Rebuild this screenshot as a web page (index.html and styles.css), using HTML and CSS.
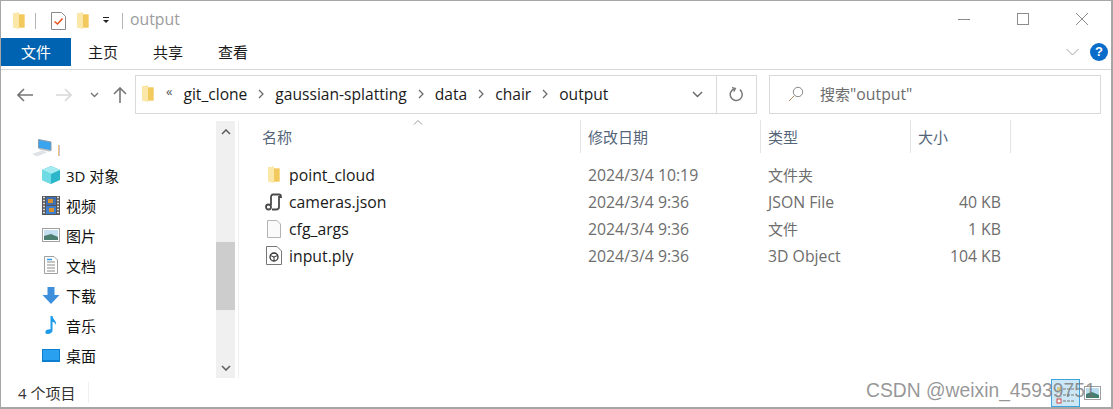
FILE: index.html
```html
<!DOCTYPE html>
<html lang="zh">
<head>
<meta charset="utf-8">
<title>output</title>
<link rel="stylesheet" href="styles.css">
</head>
<body>
<svg class="defs" width="0" height="0">
  <defs>
    <symbol id="folder" viewBox="0 0 14 18">
      <path d="M1 1.5 L7 .5 V2.5 H12.5 V15.5 H1.5 Z" fill="#f5d67b"/>
      <path d="M1 1.5 L7 .5 V17 L1.5 15.8 Z" fill="#fbe8a8"/>
      <path d="M7 2.5 H12.5 V15.5 H7 Z" fill="#f2c95c"/>
    </symbol>
  </defs>
</svg>
<div class="window">
  <header class="titlebar">
    <div class="quick">
      <svg class="qa-folder" width="14" height="18"><use href="#folder"/></svg>
      <span class="vbar first"></span>
      <svg class="qa-check" width="15" height="18" viewBox="0 0 15 18"><path d="M.5 .5H10.500L14.500 4.500V17.500H.5Z" fill="#fff" stroke="#8a8a8a"/><path d="M3.500 9.500L6.500 12L11.500 6.500" fill="none" stroke="#e8541c" stroke-width="1.6"/></svg>
      <svg class="qa-folder2" width="14" height="18"><use href="#folder"/></svg>
      <svg class="qa-drop" width="8" height="7" viewBox="0 0 8 7"><path d="M1 0.5H7" stroke="#222"/><path d="M1 3H7L4 6Z" fill="#222"/></svg>
      <span class="vbar second"></span>
      <span class="title-text">output</span>
    </div>
    <div class="winctl">
      <svg width="14" height="14" viewBox="0 0 14 14"><path d="M1 7.5H13" stroke="#8c8c8c"/></svg>
      <svg width="14" height="14" viewBox="0 0 14 14"><rect x="1.5" y="1.5" width="11" height="11" fill="none" stroke="#8c8c8c"/></svg>
      <svg width="14" height="14" viewBox="0 0 14 14"><path d="M1 1L13 13M13 1L1 13" stroke="#8c8c8c"/></svg>
    </div>
  </header>
  <nav class="ribbon">
    <span class="tab active">文件</span>
    <span class="tab t1">主页</span>
    <span class="tab t2">共享</span>
    <span class="tab t3">查看</span>
    <span class="spacer"></span>
    <svg class="collapse" width="13" height="8" viewBox="0 0 13 8"><path d="M.5 1L6.500 7L12.500 1" fill="none" stroke="#a0a0a0"/></svg>
    <span class="help">?</span>
  </nav>
  <div class="addressrow">
    <div class="navbtns">
      <svg width="16" height="14" viewBox="0 0 16 14"><path d="M1 7H16M7 1L1 7L7 13" fill="none" stroke="#777" stroke-width="1.6"/></svg>
      <svg class="fwd" width="16" height="14" viewBox="0 0 16 14"><path d="M0 7H15M9 1L15 7L9 13" fill="none" stroke="#d8d8d8" stroke-width="1.6"/></svg>
      <svg class="recent" width="9" height="6" viewBox="0 0 9 6"><path d="M1 1L4.5 4.5L8 1" fill="none" stroke="#777" stroke-width="1.4"/></svg>
      <svg class="up" width="14" height="16" viewBox="0 0 14 16"><path d="M7 16V1M1 7L7 1L13 7" fill="none" stroke="#777" stroke-width="1.6"/></svg>
    </div>
    <div class="addressbox">
      <div class="crumbs">
        <svg class="crumb-folder" width="14" height="18"><use href="#folder"/></svg>
        <span class="chev-dbl">«</span>
        <span>git_clone</span>
        <svg class="sep" width="6" height="10" viewBox="0 0 6 10"><path d="M1 1L5 5L1 9" fill="none" stroke="#666" stroke-width="1.2"/></svg>
        <span>gaussian-splatting</span>
        <svg class="sep" width="6" height="10" viewBox="0 0 6 10"><path d="M1 1L5 5L1 9" fill="none" stroke="#666" stroke-width="1.2"/></svg>
        <span>data</span>
        <svg class="sep" width="6" height="10" viewBox="0 0 6 10"><path d="M1 1L5 5L1 9" fill="none" stroke="#666" stroke-width="1.2"/></svg>
        <span>chair</span>
        <svg class="sep" width="6" height="10" viewBox="0 0 6 10"><path d="M1 1L5 5L1 9" fill="none" stroke="#666" stroke-width="1.2"/></svg>
        <span>output</span>
      </div>
      <div class="addr-drop"><svg width="11" height="7" viewBox="0 0 11 7"><path d="M1 1L5.5 5.5L10 1" fill="none" stroke="#666" stroke-width="1.4"/></svg></div>
      <div class="refresh"><svg width="15" height="15" viewBox="0 0 15 15"><path d="M4.5 2.2A6 6 0 1 0 10 2.2" transform="rotate(10 7.5 7.5)" fill="none" stroke="#777" stroke-width="1.5"/><path d="M3 .6L6.4 1.4L4.8 4.6" fill="none" stroke="#777" stroke-width="1.3"/></svg></div>
    </div>
    <div class="searchbox">
      <svg width="16" height="16" viewBox="0 0 16 16"><circle cx="10" cy="6" r="4.7" fill="none" stroke="#888"/><path d="M6.5 9.5L1 15" stroke="#b98a60"/></svg>
      <span class="search-text"><span class="cjk">搜索</span>"output"</span>
    </div>
  </div>
  <main class="main">
    <aside class="sidebar">
      <ul class="tree">
        <li class="pc">
          <svg width="21" height="18" viewBox="0 0 21 18"><path d="M6.500 .5L19 3V11.500L6.500 9Z" fill="#3aa5ee" stroke="#8a98a8"/><path d="M7.500 10L18 12" stroke="#c4c9cf" stroke-width="1.500"/><path d="M0 15L10 11.500L15 13.500L5 17.500Z" fill="#dfe3e8"/></svg>
          <span class="pc-mark">|</span>
        </li>
        <li><svg width="18" height="18" viewBox="0 0 18 18"><path d="M9 0L18 4V14L9 18L0 14V4Z" fill="#2bb6c9"/><path d="M9 0L18 4L9 8L0 4Z" fill="#a5ecf2"/><path d="M0 4L9 8V18L0 14Z" fill="#6fdbe4"/></svg><span>3D 对象</span></li>
        <li><svg width="18" height="19" viewBox="0 0 18 19"><rect width="18" height="19" fill="#555"/><path d="M1 1.500H3M1 4.500H3M1 7.500H3M1 10.500H3M1 13.500H3M1 16.500H3M15 1.500H17M15 4.500H17M15 7.500H17M15 10.500H17M15 13.500H17M15 16.500H17" stroke="#ddd" stroke-width="1.400"/><rect x="4" y="1" width="10" height="8" fill="#3f6fb0"/><rect x="4" y="10" width="10" height="8" fill="#3f7fd0"/><rect x="6" y="3" width="5" height="4" fill="#d8902c"/><rect x="7" y="12" width="5" height="4" fill="#d8902c"/></svg><span>视频</span></li>
        <li><svg width="18" height="14" viewBox="0 0 18 14"><rect x=".5" y=".5" width="17" height="13" fill="#fff" stroke="#a0a0a0"/><rect x="2" y="2" width="14" height="10" fill="#c3dff0"/><path d="M2 8L9 6L16 9V12H2Z" fill="#4d7f70"/></svg><span>图片</span></li>
        <li><svg width="14" height="18" viewBox="0 0 14 18"><path d="M.5 .5H10L13.5 4V17.5H.5Z" fill="#fff" stroke="#a0a0a0"/><path d="M3 6H11M3 9H11M3 12H11M3 15H11" stroke="#8a8a8a"/><path d="M3 3.5H8" stroke="#2e9be8" stroke-width="1.5"/></svg><span>文档</span></li>
        <li><svg width="17" height="17" viewBox="0 0 17 17"><path d="M5 0H12V8H17L8.500 17L0 8H5Z" fill="#3d8fdc"/></svg><span>下载</span></li>
        <li><svg class="music" width="12" height="18" viewBox="0 0 12 18"><path d="M5.500 0H7.500C8 4 12 5 11 9C10 6.500 8.500 6 7.500 6V14.500C7.500 16.500 5 18 2.500 18C0.500 18 0 16.500 0.500 15.500C1 14 3.500 13 5.500 13.500Z" fill="#1e9be8"/></svg><span>音乐</span></li>
        <li><svg width="18" height="13" viewBox="0 0 18 13"><rect width="18" height="13" fill="#0d7fd0"/><rect x="1" y="1" width="16" height="10" fill="#2aa0f0"/></svg><span>桌面</span></li>
      </ul>
      <div class="scrollbar">
        <svg class="sb-up" width="10" height="6" viewBox="0 0 10 6"><path d="M1 5L5 1L9 5" fill="none" stroke="#606060" stroke-width="1.6"/></svg>
        <div class="thumb"></div>
        <svg class="sb-down" width="10" height="6" viewBox="0 0 10 6"><path d="M1 1L5 5L9 1" fill="none" stroke="#606060" stroke-width="1.6"/></svg>
      </div>
    </aside>
    <section class="files">
      <div class="sort-caret"><svg width="10" height="5" viewBox="0 0 10 5"><path d="M1 4.500L5 .5L9 4.500" fill="none" stroke="#999"/></svg></div>
      <div class="row head">
        <span class="c-name">名称</span>
        <span class="c-date">修改日期</span>
        <span class="c-type">类型</span>
        <span class="c-size">大小</span>
      </div>
      <div class="row item first-item">
        <span class="c-name"><svg width="18" height="18" viewBox="-2 0 18 18"><use href="#folder" width="14" height="18"/></svg>point_cloud</span>
        <span class="c-date">2024/3/4 10:19</span>
        <span class="c-type cjk">文件夹</span>
        <span class="c-size"></span>
      </div>
      <div class="row item">
        <span class="c-name"><svg width="18" height="18" viewBox="0 0 18 18"><path d="M14 1.500H8C6.500 1.500 6 3 6 4V12M14 1.500C15.500 1.500 16 3 16 4H14V14C14 16 13 16.500 11 16.500H7" fill="none" stroke="#4a4a4a" stroke-width="1.800"/><circle cx="3.500" cy="14" r="2.500" fill="#fff" stroke="#4a4a4a" stroke-width="1.800"/></svg>cameras.json</span>
        <span class="c-date">2024/3/4 9:36</span>
        <span class="c-type">JSON File</span>
        <span class="c-size">40 KB</span>
      </div>
      <div class="row item">
        <span class="c-name"><svg width="18" height="18" viewBox="-2 0 18 18"><path d="M.5 .5H10L13.500 4V17.500H.5Z" fill="#fafafa" stroke="#b4b4b4"/></svg>cfg_args</span>
        <span class="c-date">2024/3/4 9:36</span>
        <span class="c-type cjk">文件</span>
        <span class="c-size">1 KB</span>
      </div>
      <div class="row item">
        <span class="c-name"><svg width="18" height="19" viewBox="-1 0 18 19"><path d="M.5 .5H11L15.500 5V18.500H.5Z" fill="#fff" stroke="#777"/><circle cx="8" cy="11" r="4" fill="none" stroke="#333" stroke-width="1.300"/><path d="M4.500 9.500L8 11L11.500 9.500M8 11V15" fill="none" stroke="#333"/></svg>input.ply</span>
        <span class="c-date">2024/3/4 9:36</span>
        <span class="c-type">3D Object</span>
        <span class="c-size">104 KB</span>
      </div>
    </section>
  </main>
  <footer class="status"><span>4 个项目</span></footer>
</div>
<div class="view-toggle">
  <span class="vt-details">
    <svg width="20" height="22" viewBox="0 0 20 22"><rect x="1" y="5" width="4" height="4" fill="#d8c890"/><rect x="1" y="11" width="4" height="4" fill="#fff" stroke="#888" stroke-width=".5"/><rect x="1" y="17" width="4" height="4" fill="#fff" stroke="#c44" stroke-width="1"/><path d="M7 7H19M7 13H19M7 19H19" stroke="#777" stroke-dasharray="3 1"/></svg>
  </span>
  <svg width="17" height="14" viewBox="0 0 17 14"><rect x=".5" y=".5" width="16" height="13" fill="#fff" stroke="#a0a0a0"/><rect x="2" y="2" width="13" height="10" fill="#bcdcf0"/><path d="M2 8L8 6L15 9V12H2Z" fill="#3f7f70"/></svg>
</div>
<div class="watermark">CSDN @weixin_45939751</div>
</body>
</html>
```
FILE: styles.css
```css
* { box-sizing: border-box; }
html, body { margin: 0; height: 100%; }
body {
  position: relative;
  width: 1113px;
  height: 409px;
  overflow: hidden;
  background: #fff;
  font-family: "Open Sans", "Noto Sans CJK SC", sans-serif;
  font-size: 15.8px;
  color: #1a1a1a;
}
.defs { position: absolute; }
svg { display: block; flex: none; }
.cjk { font-size: 15px; }

.window {
  display: flex;
  flex-direction: column;
  height: 409px;
  border: 1px solid #a6a6a6;
  border-bottom-width: 2px;
  border-right-width: 2px;
}

.titlebar {
  display: flex;
  justify-content: space-between;
  height: 37px;
  flex: none;
}
.quick { display: flex; align-items: center; padding: 2px 0 0 11px; }
.vbar { width: 1px; height: 16px; background: #b4b4b4; }
.vbar.first { margin-left: 9px; }
.qa-check { margin-left: 15px; }
.qa-folder2 { margin-left: 10px; }
.qa-drop { margin-left: 12px; }
.vbar.second { margin-left: 12px; }
.title-text { margin: -3px 0 0 7px; color: #9c9c9c; }
.winctl { display: flex; align-items: center; gap: 45px; padding: 0 22px 2px 0; }

.ribbon {
  display: flex;
  align-items: center;
  height: 32px;
  flex: none;
  padding-bottom: 3px;
  border-bottom: 1px solid #d9d9d9;
}
.tab { height: 28px; line-height: 28px; font-size: 15px; }
.tab.active { width: 70px; background: #0063b1; color: #fff; text-align: center; }
.t1 { margin-left: 17px; }
.t2 { margin-left: 35px; }
.t3 { margin-left: 35px; }
.spacer { flex: 1; }
.collapse { margin-right: 11px; }
.help {
  width: 18px;
  height: 18px;
  margin-right: 3px;
  border-radius: 50%;
  background: #0a6cc9;
  color: #fff;
  font: bold 13px/18px "Liberation Sans", sans-serif;
  text-align: center;
}

.addressrow {
  display: flex;
  height: 50px;
  flex: none;
  padding-top: 5px;
}
.navbtns { display: flex; align-items: center; width: 134px; height: 39px; padding-left: 16px; }
.fwd { margin-left: 23px; }
.recent { margin-left: 18px; }
.up { margin-left: 14px; }
.addressbox {
  display: flex;
  align-items: stretch;
  width: 622px;
  height: 39px;
  border: 1px solid #d9d9d9;
}
.crumbs { flex: 1; display: flex; align-items: center; padding: 0 0 2px 5px; font-size: 15.6px; }
.chev-dbl { margin: -4px 11px 0 11px; font-size: 13px; line-height: 1; color: #555; }
.sep { margin: 0 11px; }
.addr-drop { display: flex; align-items: center; padding-right: 13px; }
.refresh {
  display: flex;
  align-items: center;
  justify-content: center;
  width: 40px;
  border-left: 1px solid #d9d9d9;
}
.searchbox {
  display: flex;
  align-items: center;
  gap: 16px;
  width: 332px;
  height: 39px;
  margin-left: 12px;
  padding: 0 0 2px 18px;
  border: 1px solid #d9d9d9;
  color: #6d6d6d;
}

.main { flex: 1; display: flex; min-height: 0; }
.sidebar { display: flex; width: 238px; height: 257px; margin-top: 1px; flex: none; border-right: 1px solid #f0f0f0; }
.tree { flex: 1; margin: 0; padding: 14px 0 0 41px; list-style: none; }
.tree li { display: flex; align-items: center; height: 30px; gap: 6px; font-size: 15px; color: #111; }
.tree li svg { width: 18px; }
.tree li .music { margin: 0 3px; width: 12px; }
.tree .pc { height: 26px; margin-left: -10px; gap: 3px; }
.tree .pc svg { width: 21px; }
.pc-mark { font-size: 11px; color: #b5651d; }
.tree .pc + li { margin-top: -1px; }

.scrollbar {
  position: relative;
  display: flex;
  flex-direction: column;
  align-items: center;
  width: 19px;
  margin-right: 3px;
  background: #f0f0f0;
}
.sb-up { margin-top: 8px; }
.thumb { width: 100%; height: 68px; margin-top: 107px; background: #cdcdcd; }
.sb-down { margin-top: 55px; }

.files { position: relative; flex: 1; padding-left: 23px; }
.sort-caret { position: absolute; left: 174px; top: 0; }
.row { display: grid; grid-template-columns: 319px 180px 150px 100px; }
.row > span { display: flex; align-items: center; }
.head { height: 33px; color: #54657a; font-size: 15px; }
.head span { padding: 0 0 1px 7px; border-right: 1px solid #e5e5e5; }
.head .c-name { padding-left: 0; }
.item { height: 27px; color: #1a1a1a; }
.first-item { margin-top: 8px; }
.c-name { gap: 6px; padding-left: 3px; }
.item .c-date,
.item .c-type { padding-left: 7px; color: #6d6d6d; }
.item .c-size { justify-content: flex-end; padding-right: 10px; color: #6d6d6d; }

.status {
  display: flex;
  align-items: center;
  height: 30px;
  flex: none;
  padding-left: 17px;
  color: #333;
  font-size: 15px;
}
.status span { padding-right: 13px; border-right: 1px solid #f0f0f0; }

.view-toggle {
  position: absolute;
  left: 1051px;
  top: 379px;
  display: flex;
  align-items: center;
  gap: 4px;
}
.vt-details {
  display: flex;
  align-items: center;
  justify-content: center;
  width: 29px;
  height: 28px;
  background: #cce8f7;
  border: 1px solid #3ea3dc;
}
.watermark {
  position: absolute;
  left: 866px;
  top: 380px;
  color: rgba(110, 110, 110, .72);
  font: 19.3px/22px "Liberation Sans", sans-serif;
}
```
